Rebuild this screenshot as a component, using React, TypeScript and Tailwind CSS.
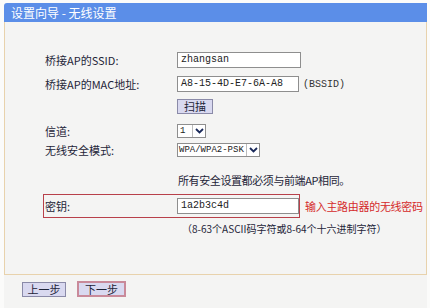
import React from "react";

const cjk = { fontFamily: '"Noto Sans CJK SC", "Noto Sans", sans-serif' };
const mono = { fontFamily: '"Liberation Mono", "Noto Sans CJK SC", monospace' };

function Chevron() {
  return (
    <svg width="9" height="6" viewBox="0 0 9 6">
      <path d="M1 1 L4.5 4.5 L8 1" fill="none" stroke="#1a2a5a" strokeWidth="1.8" />
    </svg>
  );
}

function Label({ children }: { children: React.ReactNode }) {
  return (
    <div className="w-[132px] shrink-0 text-[11px] leading-[14px] text-[#1e2438]" style={cjk}>
      {children}
    </div>
  );
}

function Btn({ children, hot }: { children: React.ReactNode; hot?: boolean }) {
  return (
    <div
      className={
        "flex items-center justify-center bg-[#d9d9f0] text-[11px] leading-[13px] text-[#1e2438] " +
        (hot ? "w-[49px] h-[16px] border-2 border-[#c98a9a]" : "w-[44px] h-[15px] border border-[#8a8aa8]")
      }
      style={cjk}
    >
      {children}
    </div>
  );
}

export default function App() {
  return (
    <div className="w-[430px] h-[308px] bg-[#fbfbfa] pt-[3px] pl-[4px] pr-[3px] flex flex-col overflow-hidden">
      <div className="h-[19px] bg-[#5b8ee8] rounded-tl-[3px] flex items-center pl-[7px] text-white text-[12px]" style={cjk}>
        设置向导 - 无线设置
      </div>
      <div className="flex-1 flex flex-col bg-[#f4f4f3] border-x border-[#e8d2ac] pl-[38px]">
        <div className="mt-[30px] h-[16px] flex items-center pl-[2px]">
          <Label>桥接AP的SSID:</Label>
          <div className="w-[124px] h-[16px] bg-white border border-[#8e8e8e] text-[10px] leading-[14px] pl-[3px] text-[#222]" style={mono}>
            zhangsan
          </div>
        </div>
        <div className="mt-[8px] h-[16px] flex items-center pl-[2px]">
          <Label>桥接AP的MAC地址:</Label>
          <div className="w-[122px] h-[16px] bg-white border border-[#8e8e8e] text-[10px] leading-[14px] pl-[3px] text-[#222]" style={mono}>
            A8-15-4D-E7-6A-A8
          </div>
          <div className="ml-[4px] text-[10px] text-[#333]" style={mono}>(BSSID)</div>
        </div>
        <div className="mt-[7px] flex pl-[134px]">
          <div className="w-[36px] h-[15px] flex items-center justify-center bg-[#d9d9f0] border border-[#8a8aa8] text-[11px] leading-[13px] text-[#1e2438]" style={cjk}>
            扫描
          </div>
        </div>
        <div className="mt-[10px] h-[14px] flex items-center pl-[2px]">
          <Label>信道:</Label>
          <div className="h-[14px] flex items-stretch bg-white border border-[#8e8e8e]">
            <div className="w-[14px] text-[9px] leading-[12px] pl-[2px] text-[#222]" style={mono}>1</div>
            <div className="w-[13px] border-l border-[#bcbcbc] flex items-center justify-center"><Chevron /></div>
          </div>
        </div>
        <div className="mt-[5px] h-[14px] flex items-center pl-[2px]">
          <Label>无线安全模式:</Label>
          <div className="h-[14px] flex items-stretch bg-white border border-[#8e8e8e]">
            <div className="w-[68px] text-[9px] leading-[12px] pl-[1px] text-[#222]" style={mono}>WPA/WPA2-PSK</div>
            <div className="w-[13px] border-l border-[#bcbcbc] flex items-center justify-center"><Chevron /></div>
          </div>
        </div>
        <div className="mt-[16px] h-[14px] pl-[135px] text-[11px] leading-[14px] tracking-[-0.4px] text-[#1e2438] whitespace-nowrap" style={cjk}>
          所有安全设置都必须与前端AP相同。
        </div>
        <div className="mt-[7px] flex items-center">
          <div className="w-[257px] h-[24px] border border-[#b8404a] flex items-center pl-[1px]">
            <Label>密钥:</Label>
            <div className="w-[122px] h-[16px] bg-white border border-[#8e8e8e] text-[10px] leading-[14px] pl-[3px] text-[#222]" style={mono}>
              1a2b3c4d
            </div>
          </div>
          <div className="ml-[5px] text-[11px] leading-[14px] tracking-[-0.3px] text-[#d42a2a] whitespace-nowrap" style={cjk}>
            输入主路由器的无线密码
          </div>
        </div>
        <div className="mt-[4px] h-[14px] pl-[139px] text-[10px] leading-[14px] text-[#1e2438] whitespace-nowrap" style={cjk}>
          （8-63个ASCII码字符或8-64个十六进制字符）
        </div>
      </div>
      <div className="h-[34px] border-t border-[#e8d2ac] bg-[#f4f4f3] flex items-start pt-[7px] pl-[18px] gap-[11px]">
        <Btn>上一步</Btn>
        <div className="-mt-[1px]"><Btn hot>下一步</Btn></div>
      </div>
    </div>
  );
}
